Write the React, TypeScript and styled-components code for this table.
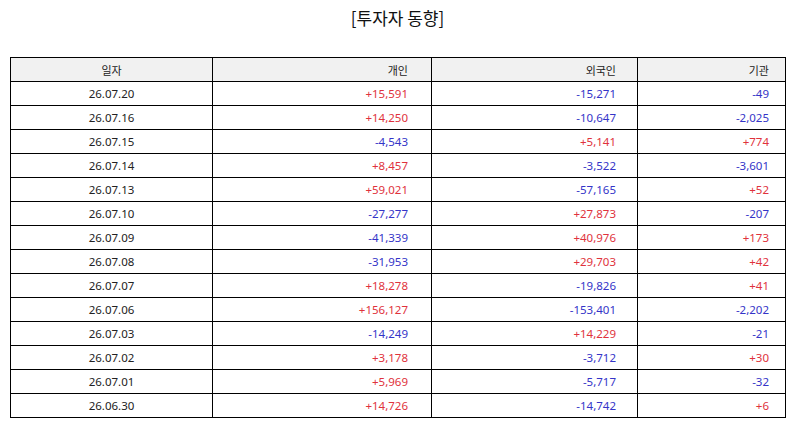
import styled, { createGlobalStyle } from "styled-components";

const GlobalStyle = createGlobalStyle`
  body {
    margin: 0;
    background: #ffffff;
    font-family: "Noto Sans", "Noto Sans CJK KR", sans-serif;
  }
`;

const Page = styled.div`
  width: 794px;
  padding: 0 9px 0 10px;
  box-sizing: border-box;
`;

const Title = styled.h1`
  margin: 0;
  padding-top: 5px;
  height: 57px;
  box-sizing: border-box;
  text-align: center;
  font-family: "Noto Sans CJK KR", sans-serif;
  font-size: 17px;
  font-weight: 400;
  color: #111;
`;

const Table = styled.table`
  width: 775px;
  border-collapse: collapse;
  table-layout: fixed;
  font-size: 11.5px;
  color: #222;
`;

const Head = styled.th<{ $align: "center" | "right"; $pad: number }>`
  height: 23px;
  padding: 0 ${(p) => p.$pad}px 0 0;
  border: 1px solid #000;
  background: #f1f1f1;
  font-family: "Noto Sans CJK KR", sans-serif;
  font-size: 11px;
  font-weight: 400;
  text-align: ${(p) => p.$align};
`;

const Cell = styled.td<{ $align: "center" | "right"; $pad: number; $tone?: "up" | "down" }>`
  height: 23px;
  padding: 0 ${(p) => p.$pad}px 0 0;
  border: 1px solid #000;
  text-align: ${(p) => p.$align};
  color: ${(p) => (p.$tone === "up" ? "#e0323c" : p.$tone === "down" ? "#3434c8" : "#222")};
`;

const columns = [
  { label: "일자", width: 202, align: "center" as const, pad: 0 },
  { label: "개인", width: 219, align: "right" as const, pad: 23 },
  { label: "외국인", width: 206, align: "right" as const, pad: 21 },
  { label: "기관", width: 148, align: "right" as const, pad: 16 },
];

const rows: [string, string, string, string][] = [
  ["26.07.20", "+15,591", "-15,271", "-49"],
  ["26.07.16", "+14,250", "-10,647", "-2,025"],
  ["26.07.15", "-4,543", "+5,141", "+774"],
  ["26.07.14", "+8,457", "-3,522", "-3,601"],
  ["26.07.13", "+59,021", "-57,165", "+52"],
  ["26.07.10", "-27,277", "+27,873", "-207"],
  ["26.07.09", "-41,339", "+40,976", "+173"],
  ["26.07.08", "-31,953", "+29,703", "+42"],
  ["26.07.07", "+18,278", "-19,826", "+41"],
  ["26.07.06", "+156,127", "-153,401", "-2,202"],
  ["26.07.03", "-14,249", "+14,229", "-21"],
  ["26.07.02", "+3,178", "-3,712", "+30"],
  ["26.07.01", "+5,969", "-5,717", "-32"],
  ["26.06.30", "+14,726", "-14,742", "+6"],
];

const tone = (v: string) => (v.startsWith("+") ? "up" : v.startsWith("-") ? "down" : undefined);

const App = () => {
  return (
    <>
      <GlobalStyle />
      <Page>
        <Title>[투자자 동향]</Title>
        <Table>
          <colgroup>
            {columns.map((c) => (
              <col key={c.label} style={{ width: c.width }} />
            ))}
          </colgroup>
          <thead>
            <tr>
              {columns.map((c) => (
                <Head key={c.label} $align={c.align} $pad={c.pad}>
                  {c.label}
                </Head>
              ))}
            </tr>
          </thead>
          <tbody>
            {rows.map((r) => (
              <tr key={r[0]}>
                {r.map((v, i) => (
                  <Cell key={i} $align={columns[i].align} $pad={columns[i].pad} $tone={i === 0 ? undefined : tone(v)}>
                    {v}
                  </Cell>
                ))}
              </tr>
            ))}
          </tbody>
        </Table>
      </Page>
    </>
  );
};

export default App;
